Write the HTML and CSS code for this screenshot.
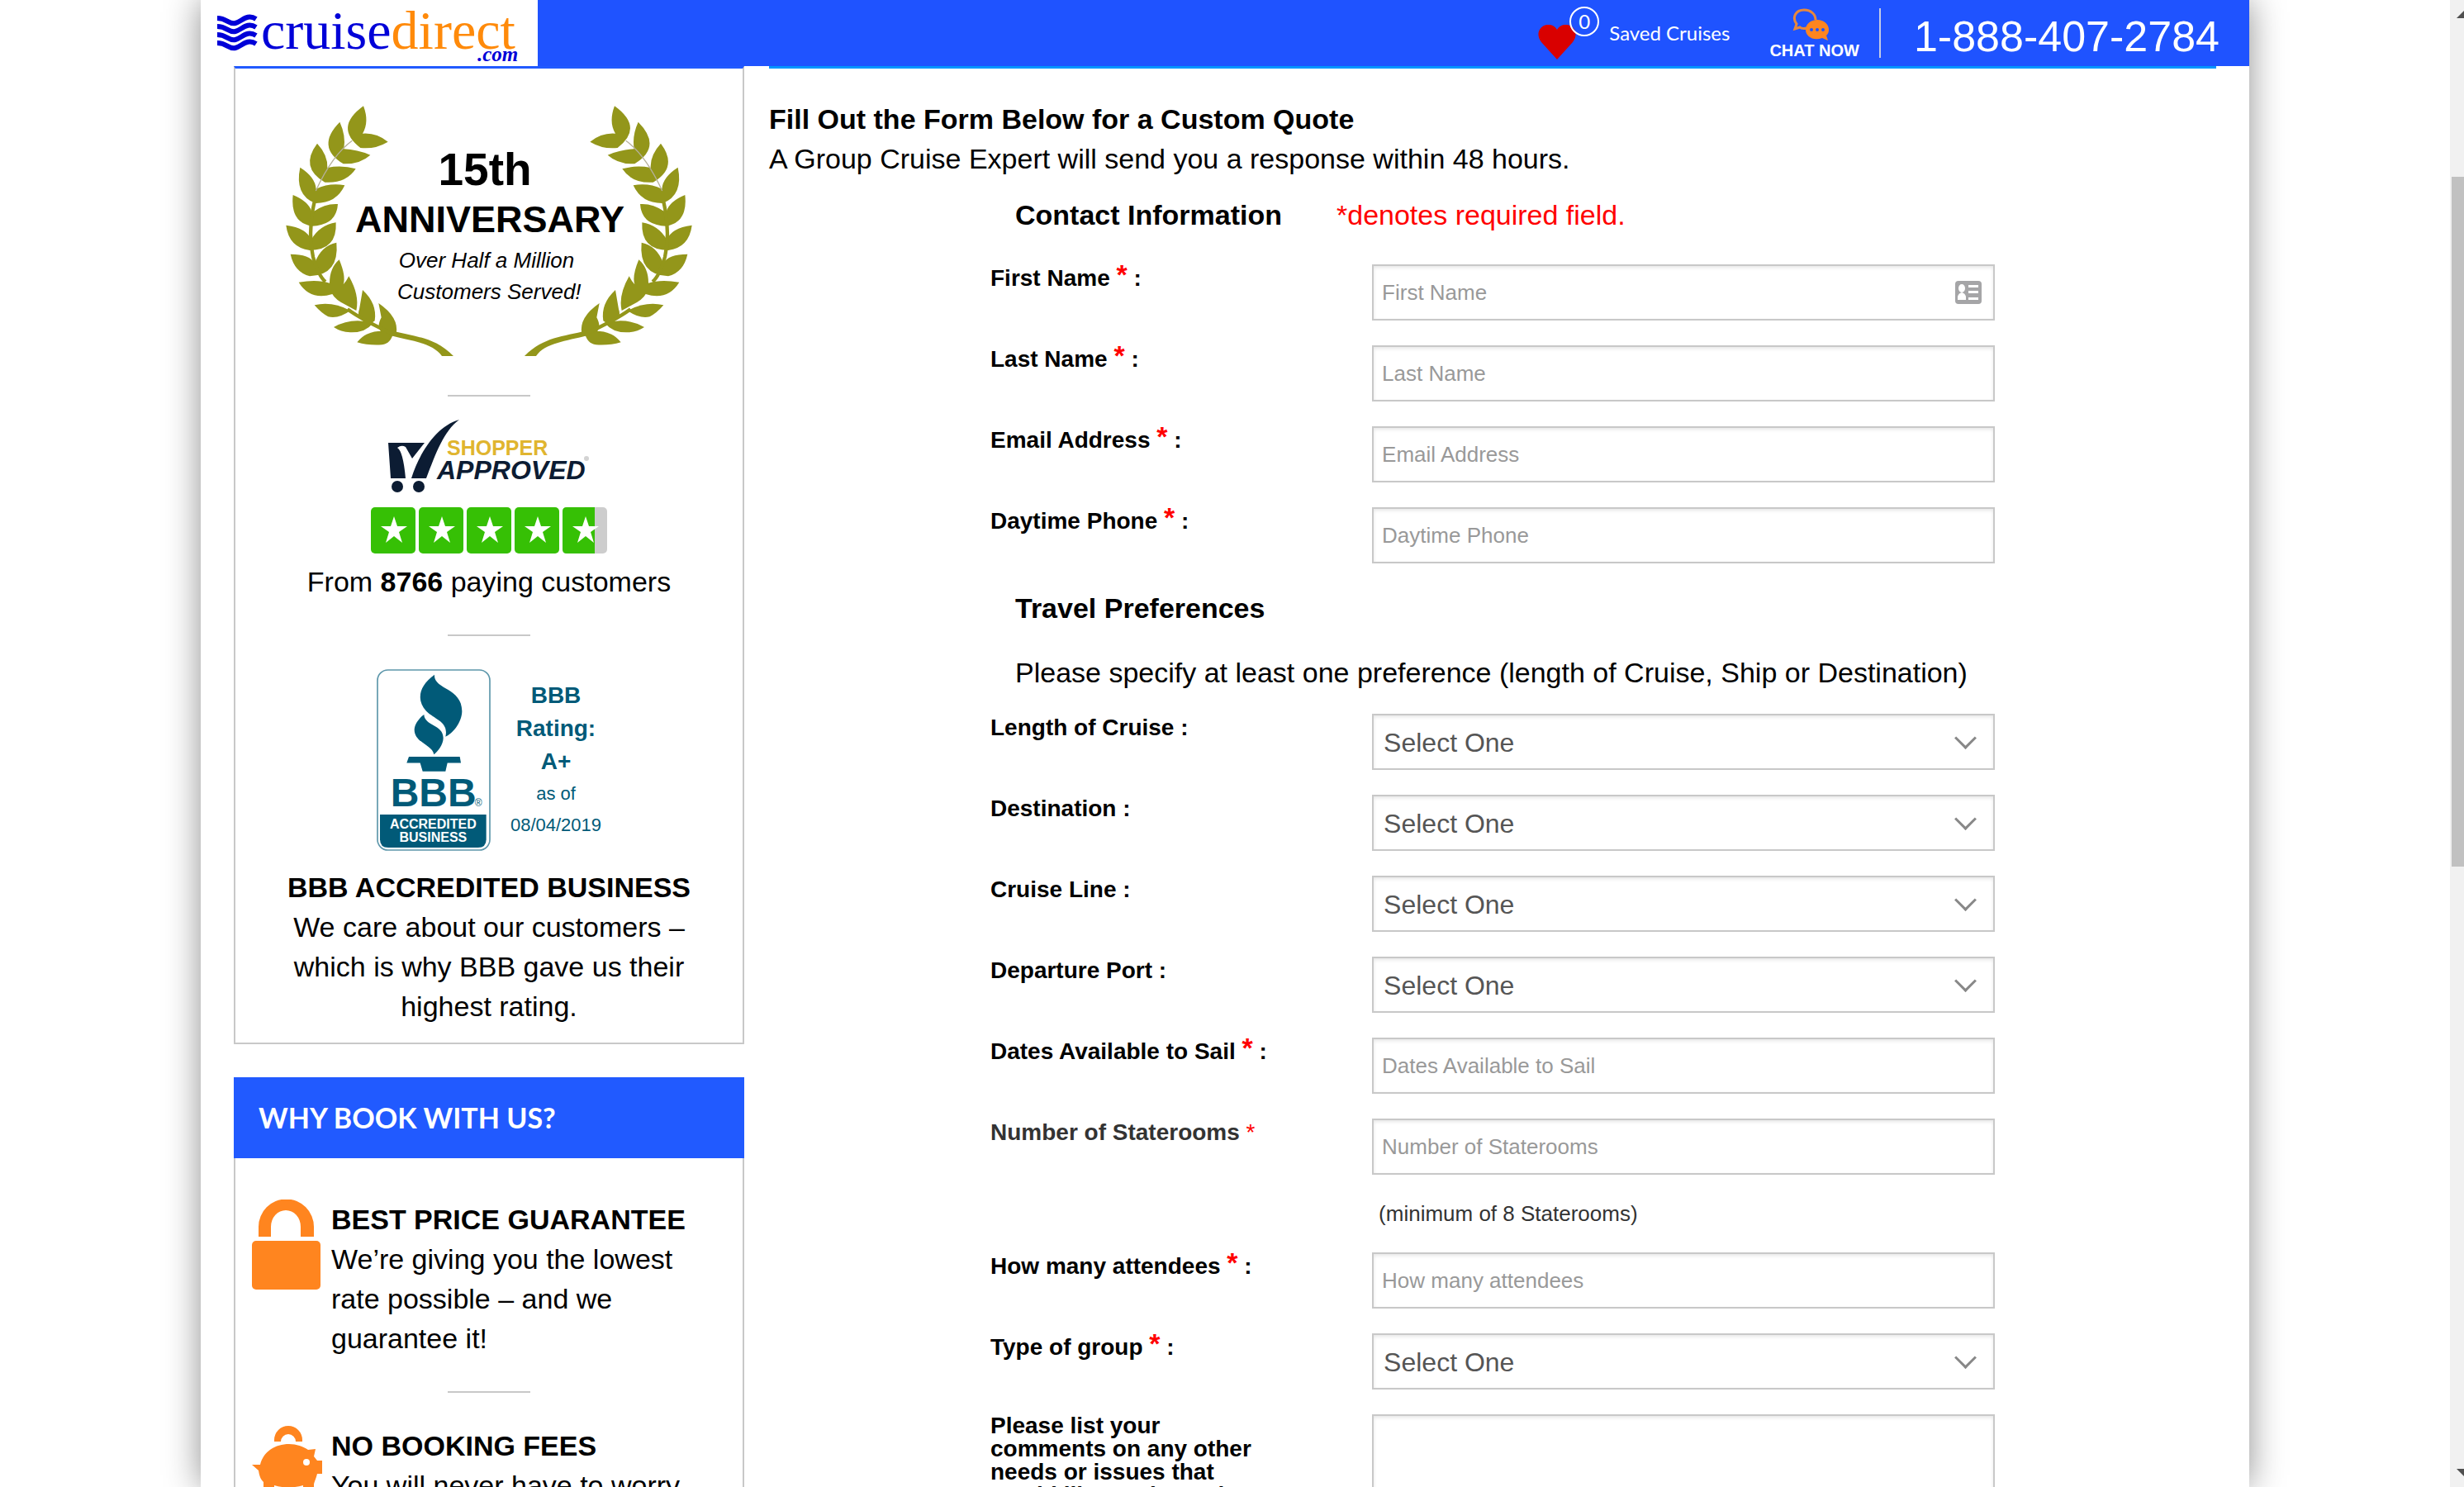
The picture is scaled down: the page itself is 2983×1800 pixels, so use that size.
FILE: index.html
```html
<!DOCTYPE html>
<html lang="en">
<head>
  <meta charset="UTF-8">
  <title>Group Cruise Quote - CruiseDirect.com</title>
  <link rel="stylesheet" href="styles.css">
</head>
<body>
<div class="viewport">
<div class="page">

  <header class="header">
    <a class="logo" href="#">
      <svg width="408" height="80" viewBox="0 0 408 80" role="img" aria-label="cruisedirect.com">
        <g class="waves">
          <path d="M20 22 C32 22 34 30 42 28 C50 26 56 16 67 23"/>
          <path d="M20 32 C32 32 34 40 42 38 C50 36 56 26 67 33"/>
          <path d="M20 42 C32 42 34 50 42 48 C50 46 56 36 67 43"/>
          <path d="M20 52 C32 52 34 60 42 58 C50 56 56 46 67 53"/>
        </g>
        <text class="logo-text" x="73" y="59">cruise<tspan class="logo-direct">direct</tspan></text>
        <text class="logo-com" x="335" y="74">.com</text>
      </svg>
    </a>
    <nav class="header-nav">
      <a class="saved" href="#">
        <span class="saved-icon">
          <svg width="46" height="42" viewBox="0 0 46 42" aria-hidden="true">
            <path fill="#d90000" d="M23 42 L4 21 C-2 13 0 5 7 1 C14 -2 20 1 23 6 C26 1 32 -2 39 1 C46 5 48 13 42 21 Z"/>
          </svg>
          <span class="saved-count">0</span>
        </span>
        Saved Cruises
      </a>
      <a class="chat" href="#">
        <svg width="54" height="39" viewBox="0 0 54 39" aria-hidden="true">
          <path fill="none" stroke="#e8883c" stroke-width="3" d="M18 24 C13 25 10 24 9 23 L3 25 L5 19 C-1 11 4 2 14 2 C23 2 28 8 28 14"/>
          <path fill="#ff851f" d="M30 14 C38 14 44 19 44 26 C44 29 43 31 41 33 L43 39 L36 36 C25 40 16 34 16 26 C16 19 22 14 30 14 Z"/>
          <circle cx="23" cy="26" r="2" fill="#1f53ff"/>
          <circle cx="30" cy="26" r="2" fill="#1f53ff"/>
          <circle cx="37" cy="26" r="2" fill="#1f53ff"/>
        </svg>
        <span>CHAT NOW</span>
      </a>
      <a class="phone" href="tel:1-888-407-2784">1-888-407-2784</a>
    </nav>
  </header>

  <div class="content">
    <aside class="sidebar">
      <section class="awards">
        <svg class="laurel" width="506" height="317" viewBox="0 0 1518 951" role="img" aria-label="15th Anniversary">
          <defs>
            <g id="branch">
              <path d="M303 22 Q325 80 300 122 Q350 118 392 152 Q345 180 292 174 Q195 100 303 22 Z"/>
              <path d="M217 80 Q240 130 232 178 Q280 180 328 200 Q290 234 230 232 Q128 170 217 80 Z"/>
              <path d="M135 158 Q174 200 172 246 Q225 236 275 250 Q240 304 163 299 Q70 245 135 158 Z"/>
              <path d="M73 245 Q128 280 131 323 Q180 300 235 310 Q205 376 128 375 Q52 345 73 245 Z"/>
              <path d="M47 345 Q108 370 116 410 Q160 375 210 378 Q205 455 116 458 Q36 445 47 345 Z"/>
              <path d="M22 455 Q98 465 113 508 Q143 455 203 445 Q208 545 108 546 Q32 535 22 455 Z"/>
              <path d="M38 560 Q108 560 126 593 Q148 530 205 518 Q216 635 108 640 Q52 625 38 560 Z"/>
              <path d="M68 662 Q135 650 180 665 Q180 610 215 580 Q240 640 230 670 Q240 660 250 640 Q290 710 277 765 L240 745 Q200 725 190 705 Q110 730 68 662 Z"/>
              <path d="M125 745 Q190 730 255 765 Q215 795 175 787 Q150 774 125 745 Z"/>
              <path d="M300 690 Q354 740 344 802 L325 815 Q274 795 288 760 Z"/>
              <path d="M195 825 Q260 788 338 810 Q310 846 255 844 Q220 842 195 825 Z"/>
              <path d="M358 738 Q434 790 422 850 Q410 864 376 850 Q346 830 368 790 Z"/>
              <path d="M280 880 Q320 826 412 843 Q404 884 370 889 Q320 892 280 880 Z"/>
              <path d="M405 838 C490 860 560 860 630 930 L588 930 C555 882 480 876 400 855 Z"/>
              <path class="branch-stem" d="M125 370 Q100 480 120 570 Q140 640 165 660"/>
              <path class="branch-stem" d="M245 760 Q300 800 410 850"/>
              <path class="branch-twig" d="M262 148 Q190 200 130 330"/>
            </g>
          </defs>
          <use href="#branch"/>
          <use href="#branch" transform="translate(1518 0) scale(-1 1)"/>
          <text class="laurel-year" x="744" y="310">15th</text>
          <text class="laurel-title" x="762" y="480">ANNIVERSARY</text>
          <text class="laurel-note" x="750" y="609">Over Half a Million</text>
          <text class="laurel-note" x="760" y="722">Customers Served!</text>
        </svg>

        <hr class="divider">

        <svg class="shopper" width="244" height="88" viewBox="0 0 244 88" role="img" aria-label="Shopper Approved">
          <g fill="#0c1c33">
            <path d="M0 28 H44 L29 47 L21 33 Q16 30 11 34 Q18 38 21 71 H3 Z"/>
            <path d="M86 0 C67 14 58 40 46 71 H28 C38 40 58 8 86 0 Z"/>
            <circle cx="11" cy="81" r="7"/>
            <circle cx="37" cy="81" r="7"/>
          </g>
          <text class="shopper-top" x="71" y="43">SHOPPER</text>
          <text class="shopper-bottom" x="59" y="72">APPROVED</text>
          <circle cx="240" cy="47" r="3" fill="#d3d3d3"/>
        </svg>

        <svg class="stars" width="286" height="56" viewBox="0 0 286 56" role="img" aria-label="4.7 out of 5 stars">
          <defs>
            <path id="star" fill="#fff" d="M28 11 L32 23 H44 L34 30 L38 43 L28 35 L18 43 L22 30 L12 23 H24 Z"/>
          </defs>
          <g fill="#36c005">
            <rect width="54" height="56" rx="5"/>
            <rect x="58" width="54" height="56" rx="5"/>
            <rect x="116" width="54" height="56" rx="5"/>
            <rect x="174" width="54" height="56" rx="5"/>
            <rect x="232" width="54" height="56" rx="5" fill="#cdcdcd"/>
            <path d="M237 0 H271 V56 H237 Q232 56 232 51 V5 Q232 0 237 0 Z"/>
          </g>
          <use href="#star"/>
          <use href="#star" x="58"/>
          <use href="#star" x="116"/>
          <use href="#star" x="174"/>
          <use href="#star" x="232"/>
        </svg>
        <p class="customers">From <b>8766</b> paying customers</p>

        <hr class="divider">

        <div class="bbb">
          <svg width="138" height="220" viewBox="0 0 414 660" role="img" aria-label="BBB Accredited Business">
            <rect class="bbb-frame" x="3" y="3" width="408" height="654" rx="38"/>
            <path fill="#015a78" d="M12 528 H398 V618 Q398 648 368 648 H42 Q12 648 12 618 Z"/>
            <g fill="#015a78" transform="translate(-48 -930) scale(1 1.033)">
              <path d="M258 920 C254 972 358 965 358 1048 C358 1090 320 1130 298 1138 C310 1085 262 1080 228 1048 C192 1010 200 960 258 920 Z"/>
              <path d="M220 1060 C222 1100 290 1095 290 1142 C290 1165 270 1190 256 1200 C250 1165 185 1160 185 1112 C187 1090 205 1070 220 1060 Z"/>
              <path d="M165 1208 H350 L354 1230 H305 L298 1260 H215 L206 1230 H157 Z"/>
            </g>
            <text class="bbb-name" x="206" y="498">BBB</text>
            <text class="bbb-reg" x="356" y="498">®</text>
            <text class="bbb-label" x="205" y="580">ACCREDITED</text>
            <text class="bbb-label" x="205" y="627">BUSINESS</text>
          </svg>
          <p class="bbb-rating">
            <b>BBB<br>Rating:<br>A+</b>
            <small>as of<br>08/04/2019</small>
          </p>
        </div>
        <h3>BBB ACCREDITED BUSINESS</h3>
        <p class="bbb-text">We care about our customers – which is why BBB gave us their highest rating.</p>
      </section>

      <section class="why">
        <h2>WHY BOOK WITH US?</h2>
        <div class="why-item">
          <svg width="85" height="110" viewBox="0 0 85 110" aria-hidden="true">
            <path fill="#ff851f" d="M8 45 V33 A33 33 0 0 1 75 33 V45 H59 V33 A18 20 0 0 0 23 33 V45 Z"/>
            <rect y="50" width="83" height="59" rx="5" fill="#ff851f"/>
          </svg>
          <div>
            <h3>BEST PRICE GUARANTEE</h3>
            <p>We’re giving you the lowest rate possible – and we guarantee it!</p>
          </div>
        </div>
        <hr class="divider">
        <div class="why-item">
          <svg width="85" height="110" viewBox="0 0 85 110" aria-hidden="true">
            <g fill="#ff851f">
              <path d="M27 19 V17 A17 17 0 0 1 61 17 V19 H53 A9 9 0 0 0 35 19 Z"/>
              <path d="M0 47 L10 47 C14 31 28 22 45 22 C54 22 62 25 68 29 L77 28 L75 37 L79 42 H85 V58 H79 C77 66 75 68 75 72 V100 H62 V72 Q44 77 27 72 V100 H14 V68 C10 64 9 60 8 54 Z"/>
            </g>
            <circle cx="66" cy="44" r="4" fill="#fff"/>
          </svg>
          <div>
            <h3>NO BOOKING FEES</h3>
            <p>You will never have to worry about extra fees.</p>
          </div>
        </div>
      </section>
    </aside>

    <main class="main">
      <h1>Fill Out the Form Below for a Custom Quote</h1>
      <p>A Group Cruise Expert will send you a response within 48 hours.</p>

      <form class="quote-form">
        <div class="form-head">
          <h2>Contact Information</h2>
          <span class="required-note">*denotes required field.</span>
        </div>
        <div class="row">
          <label for="first">First Name <em>*</em> :</label>
          <div class="field">
            <input type="text" id="first" placeholder="First Name">
            <svg class="card-icon" width="32" height="28" viewBox="0 0 32 28" aria-hidden="true">
              <rect width="32" height="28" rx="4" fill="#a5a5a7"/>
              <g fill="#fff">
                <ellipse cx="8" cy="9" rx="4" ry="5"/>
                <path d="M3 23 V19 Q4 15 8 14 Q12 15 13 19 V23 Z"/>
                <rect x="16" y="5" width="12" height="3"/>
                <rect x="16" y="12" width="12" height="3"/>
                <rect x="16" y="20" width="12" height="3"/>
              </g>
            </svg>
          </div>
        </div>
        <div class="row">
          <label for="last">Last Name <em>*</em> :</label>
          <div class="field"><input type="text" id="last" placeholder="Last Name"></div>
        </div>
        <div class="row">
          <label for="email">Email Address <em>*</em> :</label>
          <div class="field"><input type="text" id="email" placeholder="Email Address"></div>
        </div>
        <div class="row">
          <label for="phone">Daytime Phone <em>*</em> :</label>
          <div class="field"><input type="text" id="phone" placeholder="Daytime Phone"></div>
        </div>

        <div class="form-head">
          <h2>Travel Preferences</h2>
        </div>
        <p class="form-note">Please specify at least one preference (length of Cruise, Ship or Destination)</p>
        <div class="row">
          <label for="length">Length of Cruise :</label>
          <div class="field select"><select id="length"><option>Select One</option></select></div>
        </div>
        <div class="row">
          <label for="destination">Destination :</label>
          <div class="field select"><select id="destination"><option>Select One</option></select></div>
        </div>
        <div class="row">
          <label for="line">Cruise Line :</label>
          <div class="field select"><select id="line"><option>Select One</option></select></div>
        </div>
        <div class="row">
          <label for="port">Departure Port :</label>
          <div class="field select"><select id="port"><option>Select One</option></select></div>
        </div>
        <div class="row">
          <label for="dates">Dates Available to Sail <em>*</em> :</label>
          <div class="field"><input type="text" id="dates" placeholder="Dates Available to Sail"></div>
        </div>
        <div class="row">
          <label class="label-soft" for="rooms">Number of Staterooms <em>*</em></label>
          <div class="field">
            <input type="text" id="rooms" placeholder="Number of Staterooms">
            <p class="hint">(minimum of 8 Staterooms)</p>
          </div>
        </div>
        <div class="row">
          <label for="attendees">How many attendees <em>*</em> :</label>
          <div class="field"><input type="text" id="attendees" placeholder="How many attendees"></div>
        </div>
        <div class="row">
          <label for="group">Type of group <em>*</em> :</label>
          <div class="field select"><select id="group"><option>Select One</option></select></div>
        </div>
        <div class="row">
          <label class="label-long" for="comments">Please list your comments on any other needs or issues that would like to share about</label>
          <div class="field"><textarea id="comments" rows="6"></textarea></div>
        </div>
      </form>
    </main>
  </div>
</div>

<div class="scrollbar" aria-hidden="true">
  <span class="arrow arrow-up"></span>
  <span class="thumb"></span>
  <span class="arrow arrow-down"></span>
</div>
</div>
</body>
</html>
```
FILE: styles.css
```css
* {
  box-sizing: border-box;
}

body {
  margin: 0;
  font-family: "Liberation Sans", Arial, sans-serif;
  font-size: 34px;
  line-height: 48px;
  color: #000;
  background-color: #fff;
}

h1, h2, h3, p {
  margin: 0;
  font-size: 34px;
}

a {
  color: #fff;
  text-decoration: none;
}

svg {
  display: block;
  flex: none;
}

.viewport {
  display: grid;
  grid-template-columns: 1fr 17px;
  grid-template-rows: 100vh;
  height: 100vh;
  overflow: hidden;
}

.page {
  width: 100%;
  max-width: 2480px;
  margin: 0 auto;
  background-color: #fff;
  box-shadow: 0 0 40px #8f8f8f;
}

/* header */
.header {
  display: flex;
  justify-content: space-between;
  height: 80px;
  background-color: #1f53ff;
}

.logo {
  background-color: #fff;
}

.waves path {
  fill: none;
  stroke: #0000d8;
  stroke-width: 6;
}

.logo-text {
  font-family: "Liberation Serif", serif;
  font-size: 66px;
  fill: #0000d8;
}

.logo-direct {
  fill: #ff8a0a;
}

.logo-com {
  font-family: "Liberation Serif", serif;
  font-size: 25px;
  font-weight: bold;
  font-style: italic;
  fill: #0000d8;
}

.header-nav {
  display: flex;
  align-items: center;
  padding-right: 36px;
}

.saved {
  display: flex;
  align-items: center;
  gap: 40px;
  font-family: Lato, sans-serif;
  font-size: 24px;
}

.saved-icon {
  position: relative;
  padding-top: 22px;
}

.saved-count {
  position: absolute;
  top: 0;
  left: 38px;
  width: 36px;
  height: 36px;
  border: 2px solid #fff;
  border-radius: 50%;
  line-height: 32px;
  text-align: center;
}

.chat {
  display: flex;
  flex-direction: column;
  align-items: center;
  height: 60px;
  margin-left: 48px;
  padding-right: 24px;
  border-right: 2px solid #c3cbe6;
  font-size: 20px;
  font-weight: bold;
  line-height: 24px;
}

.phone {
  margin-left: 40px;
  padding-top: 8px;
  font-size: 52px;
}

/* columns */
.content {
  display: grid;
  grid-template-columns: minmax(0, 618fr) minmax(0, 1752fr);
  gap: 30px;
  padding: 0 40px;
}

.awards {
  display: flex;
  flex-direction: column;
  align-items: center;
  padding: 38px 50px 20px;
  border: 2px solid #c8c8c8;
  border-top: 3px solid #215aff;
  text-align: center;
}

.divider {
  width: 100px;
  margin: 40px auto;
  border: 0;
  border-top: 2px solid #c8c8c8;
}

.laurel use {
  fill: #93961a;
}

.branch-stem {
  fill: none;
  stroke: #93961a;
  stroke-width: 13;
}

.branch-twig {
  fill: none;
  stroke: #b5b09a;
  stroke-width: 4;
}

.laurel text {
  text-anchor: middle;
}

.laurel-year {
  font-size: 165px;
  font-weight: bold;
}

.laurel-title {
  font-size: 135px;
  font-weight: bold;
}

.laurel-note {
  font-size: 78px;
  font-style: italic;
}

.awards .shopper {
  margin-top: -12px;
}

.shopper-top {
  font-size: 25px;
  font-weight: bold;
  fill: #e0b52f;
}

.shopper-bottom {
  font-size: 32px;
  font-weight: bold;
  font-style: italic;
  fill: #0c1c33;
}

.stars {
  margin-top: 18px;
}

.customers {
  margin-top: 10px;
}

.bbb {
  display: flex;
  gap: 24px;
  padding-bottom: 20px;
}

.bbb-frame {
  fill: #fff;
  stroke: #5d97ab;
  stroke-width: 5;
}

.bbb text {
  text-anchor: middle;
  font-weight: bold;
}

.bbb-name {
  font-size: 144px;
  fill: #015a78;
}

.bbb .bbb-reg {
  font-size: 36px;
  font-weight: normal;
  text-anchor: start;
  fill: #015a78;
}

.bbb-label {
  font-size: 48px;
  fill: #fff;
}

.bbb-rating {
  padding-top: 12px;
  color: #015a78;
  font-size: 28px;
  line-height: 40px;
}

.bbb-rating small {
  display: block;
  font-size: 22px;
  line-height: 38px;
}

.why {
  margin-top: 40px;
  border: 2px solid #c8c8c8;
  border-top: 0;
}

.why h2 {
  margin: 0 -2px 50px;
  padding: 25px 30px;
  background-color: #215aff;
  color: #fff;
  font-family: Lato, sans-serif;
}

.why-item {
  display: flex;
  gap: 11px;
  padding: 0 20px;
}

/* quote form */
.main {
  padding-top: 37px;
  border-top: 3px solid #0095ff;
}

.quote-form {
  max-width: 1216px;
  margin: 20px auto 0;
}

.form-head {
  display: flex;
  gap: 66px;
  margin: 20px 0 36px;
  padding-left: 30px;
}

.required-note {
  color: #f00;
}

.form-note {
  margin: -6px 0 26px;
  padding-left: 30px;
}

.row {
  display: grid;
  grid-template-columns: 38% 62%;
  margin-bottom: 30px;
}

label {
  font-size: 28px;
  font-weight: bold;
  line-height: 34px;
}

label em {
  color: #f00;
  font-size: 34px;
  font-style: normal;
  line-height: 24px;
  vertical-align: 2px;
}

.label-soft {
  color: #333;
}

.label-soft em {
  font-size: 28px;
  font-weight: normal;
  vertical-align: baseline;
}

.label-long {
  max-width: 340px;
  line-height: 28px;
}

.field {
  position: relative;
}

input,
select,
textarea {
  display: block;
  width: 100%;
  height: 68px;
  padding: 0 10px;
  border: 2px solid #c8c8c8;
  border-radius: 0;
  background-color: #fff;
  box-shadow: inset 0 2px 4px rgba(0, 0, 0, 0.1);
  color: #555;
  font-family: inherit;
  font-size: 26px;
}

select {
  appearance: none;
  padding: 2px 12px 0;
  font-size: 32px;
}

textarea {
  height: auto;
}

::placeholder {
  color: #999;
}

.select::after {
  content: "";
  position: absolute;
  top: 20px;
  right: 26px;
  width: 16px;
  height: 16px;
  border: solid #888;
  border-width: 0 3px 3px 0;
  transform: rotate(45deg);
  pointer-events: none;
}

.card-icon {
  position: absolute;
  top: 20px;
  right: 16px;
}

.hint {
  margin-top: 30px;
  padding-left: 8px;
  color: #333;
  font-size: 26px;
  line-height: 34px;
}

/* window scrollbar */
.scrollbar {
  display: flex;
  flex-direction: column;
  position: relative;
  overflow: hidden;
  padding: 12px 0 12px 2px;
  background-color: #f1f1f1;
}

.thumb {
  flex: 0 0 47%;
  margin: 192px 0 auto;
  background-color: #c1c1c1;
}

.arrow {
  align-self: flex-start;
  margin-left: 6px;
  border: 10px solid transparent;
}

.arrow-up {
  border-top: 0;
  border-bottom-color: #505050;
}

.arrow-down {
  border-bottom: 0;
  border-top-color: #505050;
}
```
